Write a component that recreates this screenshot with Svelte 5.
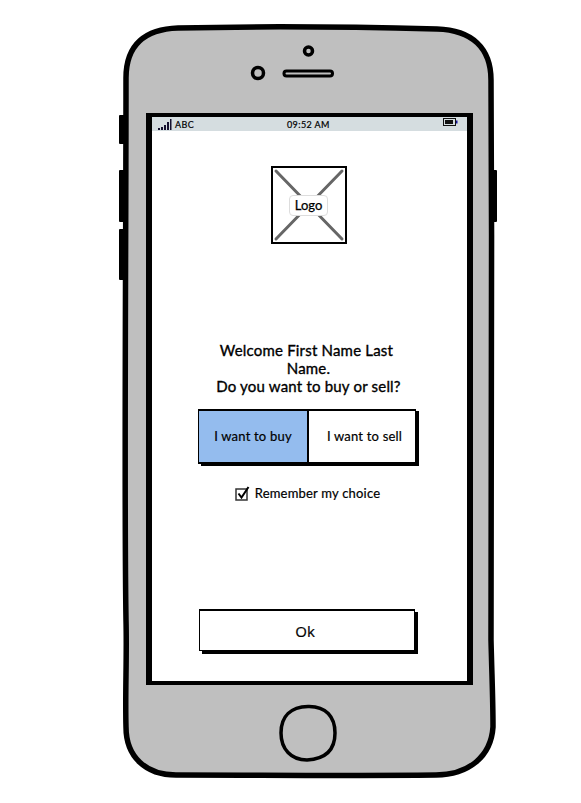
<script>
  let choice = $state('buy');
  let remember = $state(true);
</script>

<main class="page">
  <svg class="shell" width="581" height="803" viewBox="0 0 581 803" aria-hidden="true">
    <path class="key" d="M120 116h4v27h-4zM120 171h4v50h-4zM120 230h4v49h-4zM493 171h3v50h-3z" />
    <path class="body" d="M126 78C126 44 146 29 178 28C260 26 360 27 437 29C472 30 491 48 491 80C492 280 492 520 491 640C492 680 493 700 493 727C491 757 468 775 436 775C350 776 260 775 176 775C146 775 126 757 126 727C125 690 127 660 126 620C124 500 126 250 126 78Z" />
    <circle class="ring" cx="308.500" cy="51" r="4" />
    <circle class="ring" cx="258" cy="73" r="5.500" />
    <path class="speaker" d="M286.500 73.500H330" />
    <path class="speaker-in" d="M286.500 73.500H330" />
    <path class="home" d="M308 706.500C326 706 335 717 335 733C335 751 325 759 307 760C291 760 281 749 281 733C281 716 291 707 308 706.500Z" />
  </svg>

  <section class="screen">
    <header class="status">
      <svg class="signal" width="15" height="11" viewBox="0 0 15 11" aria-hidden="true">
        <path d="M1 9h2v2H1zM4 8h2v3H4zM7 6h2v5H7zM10 3h2v8h-2zM13 0h1.500v11H13z" />
      </svg>
      <span class="carrier">ABC</span>
      <span class="clock">09:52 AM</span>
      <svg class="battery" width="15" height="8" viewBox="0 0 15 8" aria-hidden="true">
        <rect x="0.500" y="0.500" width="12" height="7" fill="none" stroke="#111" />
        <rect x="2" y="2" width="8" height="4" fill="#111" />
        <path d="M13 2.500h1.500v3H13z" fill="#12129a" />
      </svg>
    </header>

    <div class="logo">
      <svg class="cross" width="72" height="74" viewBox="0 0 72 74" aria-hidden="true">
        <path d="M3 3L69 71M69 3L3 71" />
      </svg>
      <span class="logo-label">Logo</span>
    </div>

    <h1 class="welcome">Welcome First Name Last&nbsp;<br />Name.<br />Do you want to buy or sell?</h1>

    <div class="segments">
      <button class="seg" class:on={choice === 'buy'} onclick={() => (choice = 'buy')}>I want to buy</button>
      <button class="seg" class:on={choice === 'sell'} onclick={() => (choice = 'sell')}>I want to sell</button>
    </div>

    <label class="remember">
      <input type="checkbox" bind:checked={remember} />
      <svg width="15" height="15" viewBox="0 0 15 15" aria-hidden="true">
        <rect class="box" x="1" y="3" width="11" height="11" />
        {#if remember}<path class="tick" d="M3.500 7.500L6.500 11.500L13.500 1" />{/if}
      </svg>
      <span>Remember my choice</span>
    </label>

    <button class="ok">Ok</button>
  </section>
</main>

<style>
  :global(body) {
    background: #fff;
  }
  .page {
    position: relative;
    width: 581px;
    height: 803px;
    padding: 113px 0 0 146px;
    box-sizing: border-box;
    overflow: hidden;
    font-family: Lato, "Liberation Sans", sans-serif;
    color: #000;
  }
  .shell {
    position: absolute;
    left: 0;
    top: 0;
  }
  .key {
    fill: #000;
    stroke: #000;
    stroke-width: 2;
    stroke-linejoin: round;
  }
  .body {
    fill: #bfbfbf;
    stroke: #000;
    stroke-width: 5.500;
  }
  .ring {
    fill: #bfbfbf;
    stroke: #000;
    stroke-width: 3.500;
  }
  .speaker {
    fill: none;
    stroke: #000;
    stroke-width: 8;
    stroke-linecap: round;
  }
  .speaker-in {
    fill: none;
    stroke: #bfbfbf;
    stroke-width: 2;
    stroke-linecap: round;
  }
  .home {
    fill: #bfbfbf;
    stroke: #000;
    stroke-width: 3.500;
  }
  .screen {
    position: relative;
    width: 327px;
    height: 572px;
    box-sizing: border-box;
    border: solid #000;
    border-width: 4px 6px;
    background: #fff;
    display: flex;
    flex-direction: column;
    align-items: center;
  }
  .status {
    align-self: stretch;
    height: 14px;
    flex: none;
    background: #d5dde0;
    display: flex;
    align-items: center;
    position: relative;
    padding-left: 5px;
    font-size: 9px;
    letter-spacing: 0.4px;
    -webkit-text-stroke: 0.2px #000;
  }
  .signal {
    fill: #14102e;
    margin-right: 3px;
  }
  .clock {
    position: absolute;
    left: 135px;
    top: 2px;
  }
  .battery {
    position: absolute;
    left: 291px;
    top: 1px;
  }
  .logo {
    position: relative;
    width: 76px;
    height: 78px;
    box-sizing: border-box;
    margin: 35px 2px 0 0;
    border: 2px solid #000;
    display: flex;
    align-items: center;
    justify-content: center;
    flex: none;
  }
  .cross {
    position: absolute;
    left: 0;
    top: 0;
  }
  .cross path {
    fill: none;
    stroke: #666;
    stroke-width: 3;
    stroke-linecap: round;
  }
  .logo-label {
    position: relative;
    width: 39px;
    height: 21px;
    box-sizing: border-box;
    border: 1px solid #ddd;
    border-radius: 4px;
    background: #fff;
    font-size: 13px;
    line-height: 19px;
    text-align: center;
    -webkit-text-stroke: 0.25px #000;
  }
  .welcome {
    margin: 97px 2px 0 0;
    font-size: 15px;
    line-height: 18px;
    font-weight: 400;
    text-align: center;
    letter-spacing: 0.2px;
    -webkit-text-stroke: 0.35px #000;
  }
  .segments {
    display: flex;
    width: 218px;
    height: 55px;
    box-sizing: border-box;
    margin: 14px 5px 0 0;
    border: solid #000;
    border-width: 2px 1px 2px 1px;
    box-shadow: 3px 2px 0 #000;
    flex: none;
  }
  .seg {
    flex: 1;
    border: 0;
    padding: 0 0 2px 5px;
    background: #fff;
    font: 400 13px Lato, "Liberation Sans", sans-serif;
    letter-spacing: 0.2px;
    -webkit-text-stroke: 0.2px #000;
    color: #000;
  }
  .seg.on {
    flex: 0 0 110px;
    padding: 0 0 2px 0;
    background: #94bcee;
    border-right: 2px solid #000;
  }
  .remember {
    display: flex;
    align-items: center;
    gap: 5px;
    margin: 21px 4px 0 0;
    font-size: 13px;
    letter-spacing: 0.2px;
    -webkit-text-stroke: 0.2px #000;
  }
  .remember input {
    display: none;
  }
  .box {
    fill: #fff;
    stroke: #333;
    stroke-width: 1.500;
  }
  .tick {
    fill: none;
    stroke: #000;
    stroke-width: 2;
  }
  .ok {
    width: 216px;
    height: 42px;
    flex: none;
    margin: 108px 6px 0 0;
    padding: 0 3px 0 0;
    background: #fff;
    border: solid #000;
    border-width: 2px 1px 1px 1px;
    box-shadow: 3px 3px 0 #000;
    font: 500 15px "Open Sans", "Liberation Sans", sans-serif;
    -webkit-text-stroke: 0.2px #000;
    color: #000;
  }
</style>
